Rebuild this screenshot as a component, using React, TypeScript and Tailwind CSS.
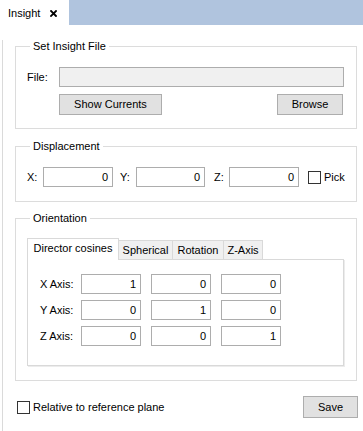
import React from "react";

function Field({ value, className = "" }: { value: string; className?: string }) {
  return (
    <div
      className={`flex h-[20px] items-center justify-end border border-[#adadad] bg-white pr-[4px] ${className}`}
    >
      {value}
    </div>
  );
}

function Check() {
  return <span className="block h-[13px] w-[13px] shrink-0 border border-[#333333] bg-white" />;
}

function Button({ label, className = "" }: { label: string; className?: string }) {
  return (
    <div
      className={`flex items-center justify-center border border-[#adadad] bg-[#e1e1e1] ${className}`}
    >
      {label}
    </div>
  );
}

const matrix = [
  { label: "X Axis:", values: ["1", "0", "0"] },
  { label: "Y Axis:", values: ["0", "1", "0"] },
  { label: "Z Axis:", values: ["0", "0", "1"] },
];

const tabs = [
  { label: "Spherical", w: "w-[54px]" },
  { label: "Rotation", w: "w-[51px]" },
  { label: "Z-Axis", w: "w-[39px]" },
];

export default function App() {
  return (
    <div className="h-[431px] w-[363px] overflow-hidden bg-white font-['Liberation_Sans',Arial,sans-serif] text-[11px] leading-[13px] text-black">
      {/* tab strip */}
      <div className="flex h-[25px] bg-[#b0c4de]">
        <div className="flex w-[69px] items-center bg-white pl-[8px] pt-[1px]">
          <span>Insight</span>
          <svg width="7" height="7" viewBox="0 0 7 7" className="ml-[10px]">
            <path d="M1 1L6 6M6 1L1 6" stroke="#000" strokeWidth="1.8" strokeLinecap="square" />
          </svg>
        </div>
      </div>

      <div className="ml-[2px] h-[406px] border-l border-[#dadada] pl-[12px] pr-[6px]">
        {/* Set Insight File */}
        <fieldset className="mt-[15px] border border-[#dcdcdc] pb-[13px] pl-[11px]">
          <legend className="ml-[3px] px-[3px]">Set Insight File</legend>
          <div className="mt-[14px] flex items-center pr-[12px]">
            <span className="w-[32px]">File:</span>
            <div className="h-[20px] flex-1 border border-[#adadad] bg-[#f0f0f0]" />
          </div>
          <div className="mt-[7px] flex justify-between pl-[32px] pr-[13px]">
            <Button label="Show Currents" className="h-[21px] w-[103px]" />
            <Button label="Browse" className="h-[21px] w-[66px]" />
          </div>
        </fieldset>

        {/* Displacement */}
        <fieldset className="mt-[11px] border border-[#dcdcdc] pb-[14px] pl-[11px]">
          <legend className="ml-[3px] px-[3px]">Displacement</legend>
          <div className="mt-[14px] flex items-center">
            <span className="w-[16px]">X:</span>
            <Field value="0" className="w-[70px]" />
            <span className="ml-[7px] w-[16px]">Y:</span>
            <Field value="0" className="w-[69px]" />
            <span className="ml-[9px] w-[15px]">Z:</span>
            <Field value="0" className="w-[70px]" />
            <span className="ml-[9px]">
              <Check />
            </span>
            <span className="ml-[3px]">Pick</span>
          </div>
        </fieldset>

        {/* Orientation */}
        <fieldset className="mt-[10px] border border-[#dcdcdc] pb-[14px] pl-[11px] pr-[12px]">
          <legend className="ml-[3px] px-[3px]">Orientation</legend>
          <div className="relative z-10 mt-[13px] -mb-px flex h-[22px] items-end">
            <div className="flex h-[22px] w-[92px] items-center justify-center border border-b-0 border-[#d9d9d9] bg-white pb-[2px]">
              Director cosines
            </div>
            {tabs.map((t) => (
              <div
                key={t.label}
                className={`flex h-[20px] items-center justify-center border border-l-0 border-[#d9d9d9] bg-[#f0f0f0] ${t.w}`}
              >
                {t.label}
              </div>
            ))}
          </div>
          <div className="flex flex-col gap-[6px] border border-[#d9d9d9] bg-white pb-[19px] pl-[12px] pt-[14px] shadow-[1px_1px_0_0_#ececec]">
            {matrix.map((row) => (
              <div key={row.label} className="flex items-center">
                <span className="w-[41px]">{row.label}</span>
                <div className="flex gap-[10px]">
                  {row.values.map((v, i) => (
                    <Field key={i} value={v} className="w-[60px]" />
                  ))}
                </div>
              </div>
            ))}
          </div>
        </fieldset>

        {/* footer */}
        <div className="-mr-[1px] mt-[15px] flex items-center justify-between pl-[2px]">
          <label className="flex items-center gap-[3px]">
            <Check />
            <span>Relative to reference plane</span>
          </label>
          <Button label="Save" className="h-[22px] w-[55px]" />
        </div>
      </div>
    </div>
  );
}
